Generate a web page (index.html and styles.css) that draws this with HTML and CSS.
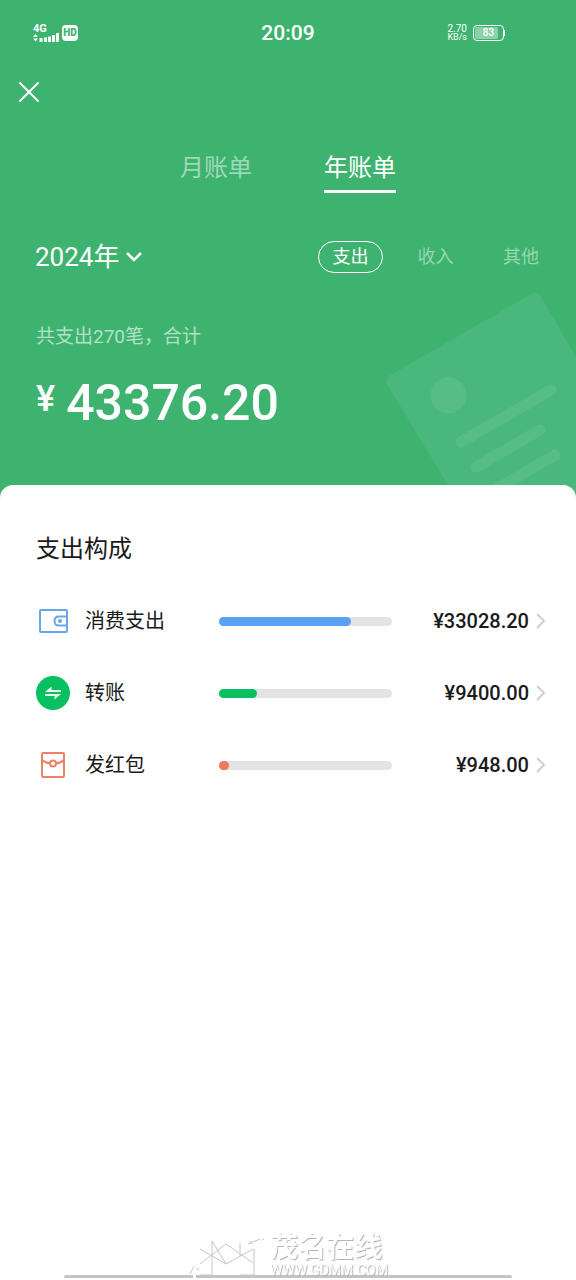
FILE: index.html
```html
<!DOCTYPE html>
<html lang="zh-CN">
<head>
<meta charset="utf-8">
<meta name="viewport" content="width=device-width, initial-scale=1">
<title>年账单</title>
<link rel="stylesheet" href="styles.css">
</head>
<body>
<header class="hero">
  <svg class="hero-art" viewBox="370 280 206 213" aria-hidden="true">
    <path d="M389 376L533 293Q537 291 540 295L640 468L490 555L387 384Q385 379 389 376Z" fill="#4ab87c"/>
    <circle cx="448.500" cy="395.500" r="18" fill="#56be85"/>
    <path d="M461 442L551 390M476 467L540 430M490 493L555 455" stroke="#56be85" stroke-width="11" stroke-linecap="round"/>
  </svg>

  <div class="status">
    <div class="status-left">
      <div class="network">
        <span class="network-type">4G</span>
        <svg width="26" height="9" viewBox="0 0 26 9" fill="#fff" aria-hidden="true">
          <path d="M0 4L2.500 1L5 4ZM0 5.500H5L2.500 8.500ZM6.500 5h3v4h-3zM11 4.500h3V9h-3zM15 3.500h3V9h-3zM19 2h3v7h-3zM23 0h3v9h-3z"/>
        </svg>
      </div>
      <span class="hd">HD</span>
    </div>
    <time class="clock">20:09</time>
    <div class="status-right">
      <div class="speed"><span>2.70</span><span>KB/s</span></div>
      <div class="battery"><span class="battery-level">83</span></div>
    </div>
  </div>

  <button class="close" type="button" aria-label="关闭">
    <svg width="22" height="22" viewBox="0 0 22 22" fill="none" stroke="#fff" stroke-width="2" stroke-linecap="round"><path d="M2 2L20 20M20 2L2 20"/></svg>
  </button>

  <nav class="tabs">
    <button class="tab" type="button">月账单</button>
    <button class="tab tab-active" type="button">年账单</button>
  </nav>

  <div class="filters">
    <button class="year" type="button">2024年
      <svg width="16" height="10" viewBox="0 0 16 10" fill="none" stroke="#fff" stroke-width="2.600"><path d="M1 1L8 8L15 1"/></svg>
    </button>
    <div class="kinds">
      <button class="kind kind-active" type="button">支出</button>
      <button class="kind" type="button">收入</button>
      <button class="kind" type="button">其他</button>
    </div>
  </div>

  <p class="summary">共支出270笔，合计</p>
  <p class="total"><span class="currency">¥</span><span>43376.20</span></p>
</header>

<main class="panel">
  <h1 class="panel-title">支出构成</h1>
  <a class="row" href="#consume">
    <svg class="row-icon" viewBox="0 0 34 34" fill="none" stroke="#67a6ea" stroke-width="2" aria-hidden="true">
      <rect x="4" y="6" width="27" height="22" rx="1"/>
      <path d="M31 12.500H23Q18.500 12.500 18.500 17T23 21.500H31"/>
      <circle cx="24" cy="17" r="2" fill="#67a6ea" stroke="none"/>
    </svg>
    <span class="row-name">消费支出</span>
    <span class="track"><span class="fill fill-blue" style="width:76.14%"></span></span>
    <span class="amount">¥33028.20
      <svg class="chevron" viewBox="0 0 10 16"><path d="M1 1L8 8L1 15"/></svg>
    </span>
  </a>
  <a class="row" href="#transfer">
    <svg class="row-icon" viewBox="0 0 34 34" aria-hidden="true">
      <circle cx="17" cy="17" r="17" fill="#07c160"/>
      <path d="M9 16L15.500 10.500V14H25V16ZM9 18H25L18.500 23.500V20H9Z" fill="#e9faf0"/>
    </svg>
    <span class="row-name">转账</span>
    <span class="track"><span class="fill fill-green" style="width:21.67%"></span></span>
    <span class="amount">¥9400.00
      <svg class="chevron" viewBox="0 0 10 16"><path d="M1 1L8 8L1 15"/></svg>
    </span>
  </a>
  <a class="row" href="#redpacket">
    <svg class="row-icon" viewBox="0 0 34 34" fill="none" stroke="#ee8065" stroke-width="2" aria-hidden="true">
      <rect x="6" y="5" width="22" height="24" rx="1"/>
      <path d="M6 12Q10 15 14 15.500M28 12Q25 15 20 15.500"/>
      <circle cx="17" cy="15.500" r="3"/>
    </svg>
    <span class="row-name">发红包</span>
    <span class="track"><span class="fill fill-red" style="width:2.19%"></span></span>
    <span class="amount">¥948.00
      <svg class="chevron" viewBox="0 0 10 16"><path d="M1 1L8 8L1 15"/></svg>
    </span>
  </a>

  <footer class="footer">
    <div class="home-bar"></div>
    <div class="mark">
      <svg class="mark-logo" width="76" height="43" viewBox="0 0 76 43" fill="none" aria-hidden="true">
        <path d="M5 38h3v5H5z" fill="#fff"/>
        <path d="M24 4V38H12M12 12L38 27L65 12M12 27L38 7L65 26M24 4L38 27M52 6V19M66 12V38H52M2 37L6 29M8 31L11 33M60 7L72 2M62 4L64 7M74 3L76 2" stroke="#c6c6c6"/>
      </svg>
      <div class="mark-text">
        <span class="mark-name">茂名在线</span>
        <span class="mark-url">WWW.GDMM.COM</span>
      </div>
    </div>
  </footer>
</main>
</body>
</html>
```
FILE: styles.css
```css
* { box-sizing: border-box; }

body {
  margin: 0;
  min-height: 100vh;
  display: flex;
  flex-direction: column;
  background: #3eb370;
  color: #1a1a1a;
  font-family: Roboto, "Noto Sans CJK SC", sans-serif;
}

button {
  margin: 0;
  padding: 0;
  border: 0;
  background: none;
  color: inherit;
  font: inherit;
  cursor: pointer;
}

p, h1 { margin: 0; }
svg { display: block; flex: none; }

.hero {
  position: relative;
  color: #fff;
  padding-bottom: 52px;
}

.hero > * { position: relative; }

.hero > .hero-art {
  position: absolute;
  right: 0;
  bottom: -8px;
  width: 206px;
  height: 213px;
}

.status {
  display: grid;
  grid-template-columns: 1fr auto 1fr;
  align-items: center;
  height: 66px;
  padding: 0 72px 0 33px;
  column-gap: 8px;
}

.status-left, .status-right {
  display: flex;
  align-items: center;
  gap: 3px;
}

.status-right {
  justify-content: flex-end;
  gap: 6px;
}

.network-type {
  display: block;
  font-size: 11px;
  font-weight: 700;
  line-height: 9px;
}

.hd {
  width: 16px;
  height: 16px;
  border-radius: 4px;
  background: #fff;
  color: #3eb370;
  font-size: 10px;
  font-weight: 900;
  line-height: 16px;
  text-align: center;
}

.clock {
  padding-left: 39px;
  font-size: 21px;
  font-weight: 500;
  line-height: 24px;
}

.speed {
  display: flex;
  flex-direction: column;
  align-items: center;
  font-size: 9px;
  line-height: 9px;
}

.speed span:first-child { font-size: 10px; }

.battery {
  position: relative;
  width: 31px;
  height: 16px;
  padding: 1px;
  border: 1px solid #fff;
  border-radius: 4px;
}

.battery::after {
  content: "";
  position: absolute;
  right: -2px;
  top: 4px;
  width: 1px;
  height: 6px;
  background: #fff;
}

.battery-level {
  display: block;
  width: 23px;
  padding-left: 4px;
  border-radius: 2px;
  background: #8bd1a9;
  font-size: 10px;
  font-weight: 500;
  line-height: 12px;
  text-align: center;
}

.close {
  display: block;
  margin: 15px 0 0 18px;
}

.tabs {
  display: flex;
  justify-content: center;
  gap: 72px;
  margin-top: 48px;
}

.tab {
  height: 42px;
  padding-bottom: 5px;
  border-bottom: 3px solid transparent;
  font-size: 24px;
  line-height: 34px;
  color: #9fd9b7;
}

.tab-active {
  color: #fff;
  border-color: #fff;
}

.filters {
  display: flex;
  align-items: center;
  justify-content: space-between;
  margin-top: 46px;
  padding: 0 36px 0 35px;
}

.year {
  display: flex;
  align-items: center;
  gap: 7px;
  font-size: 26px;
  line-height: 36px;
}

.kinds {
  display: flex;
  gap: 20px;
}

.kind {
  width: 65px;
  height: 32px;
  border: 1px solid transparent;
  border-radius: 16px;
  font-size: 18px;
  line-height: 30px;
  color: #96d6b1;
}

.kind-active {
  border-color: #fff;
  color: #fff;
}

.kind:last-child {
  width: auto;
  margin-left: 14px;
}

.summary {
  margin: 48px 36px 0;
  font-size: 19px;
  line-height: 28px;
  color: #b2e1c6;
}

.total {
  display: flex;
  margin: 22px 36px 0;
  gap: 11px;
  font-size: 50px;
  font-weight: 500;
  line-height: 60px;
}

.currency {
  font-size: 36px;
  line-height: 52px;
}

.panel {
  position: relative;
  flex: 1;
  display: flex;
  flex-direction: column;
  padding: 46px 30px 0 36px;
  border-radius: 13px 13px 0 0;
  background: #fff;
}

.panel-title {
  margin-bottom: 18px;
  font-size: 24px;
  font-weight: 400;
  line-height: 36px;
}

.row {
  display: grid;
  grid-template-columns: 34px 119px 5fr 4fr;
  align-items: center;
  height: 72px;
  column-gap: 15px;
  color: inherit;
  text-decoration: none;
}

.row-icon {
  width: 34px;
  height: 34px;
}

.row-name {
  font-size: 20px;
  line-height: 30px;
}

.track {
  height: 9px;
  border-radius: 5px;
  background: #e4e4e4;
}

.fill {
  display: block;
  height: 9px;
  min-width: 10px;
  border-radius: 5px;
}

.fill-blue { background: #5aa0f5; }
.fill-green { background: #07c160; }
.fill-red { background: #f2785a; }

.amount {
  display: flex;
  align-items: center;
  justify-content: flex-end;
  gap: 7px;
  font-size: 20px;
  font-weight: 500;
  line-height: 30px;
}

.chevron {
  width: 10px;
  height: 16px;
  fill: none;
  stroke: #cfcfcf;
  stroke-width: 2;
}

.footer {
  display: grid;
  align-items: end;
  margin-top: auto;
  padding: 0 34px 0 28px;
}

.footer > * { grid-area: 1 / 1; }

.home-bar {
  height: 3px;
  margin-bottom: 2px;
  border-radius: 2px;
  background: #c4c4c4;
}

.mark {
  display: flex;
  align-items: flex-end;
  justify-content: center;
  gap: 6px;
}

.mark-text {
  display: flex;
  flex-direction: column;
  padding-bottom: 3px;
  color: #fff;
  text-shadow: 1px 1px 0 #b4b4b4;
}

.mark-name {
  font-size: 28px;
  font-weight: 700;
  line-height: 32px;
}

.mark-url {
  font-size: 14px;
  line-height: 13px;
}
```
